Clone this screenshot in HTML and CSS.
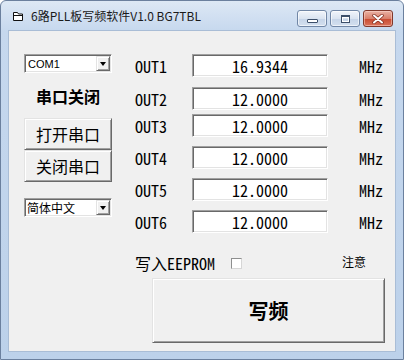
FILE: index.html
```html
<!DOCTYPE html>
<html lang="zh-CN">
<head>
    <meta charset="UTF-8">
    <title>6路PLL板写频软件V1.0 BG7TBL</title>
    <link rel="stylesheet" href="styles.css">
</head>
<body>
    <div class="window">
        <div class="titlebar">
            <svg class="app-icon" width="12" height="11" viewBox="0 0 12 11">
                <path d="M1.5 1.5h4l1 1.5h4v6.5h-9z" fill="#fff" stroke="#111" stroke-width="1"/>
                <path d="M1.5 4.5h9" stroke="#111" stroke-width="1"/>
            </svg>
            <span class="title">6路PLL板写频软件V1.0 BG7TBL</span>
            <div class="tb-buttons">
                <div class="tb-btn"><span class="ico-min"></span></div>
                <div class="tb-btn"><span class="ico-max"></span></div>
                <div class="tb-btn close">
                    <svg width="12" height="10" viewBox="0 0 12 10">
                        <path d="M2 1.5l8 7M10 1.5l-8 7" stroke="#7a2a1c" stroke-width="3.4" stroke-linecap="round"/>
                        <path d="M2 1.5l8 7M10 1.5l-8 7" stroke="#fff" stroke-width="2" stroke-linecap="round"/>
                    </svg>
                </div>
            </div>
        </div>
        <div class="client">
            <div class="left-col">
                <div class="combo">
                    <span class="combo-text latin">COM1</span>
                    <span class="combo-arrow"></span>
                </div>
                <div class="status">串口关闭</div>
                <button class="btn side-btn">打开串口</button>
                <button class="btn side-btn">关闭串口</button>
                <div class="combo lang">
                    <span class="combo-text">简体中文</span>
                    <span class="combo-arrow"></span>
                </div>
            </div>
            <div class="right-col">
                <div class="freqs">
                    <div class="row first"><span class="label">OUT1</span><div class="field">16.9344</div><span class="unit">MHz</span></div>
                    <div class="row second"><span class="label">OUT2</span><div class="field">12.0000</div><span class="unit">MHz</span></div>
                    <div class="row"><span class="label">OUT3</span><div class="field">12.0000</div><span class="unit">MHz</span></div>
                    <div class="row"><span class="label">OUT4</span><div class="field">12.0000</div><span class="unit">MHz</span></div>
                    <div class="row"><span class="label">OUT5</span><div class="field">12.0000</div><span class="unit">MHz</span></div>
                    <div class="row"><span class="label">OUT6</span><div class="field">12.0000</div><span class="unit">MHz</span></div>
                </div>
                <div class="eeprom">
                    <span class="eeprom-text">写入EEPROM</span>
                    <span class="check"></span>
                    <span class="note">注意</span>
                </div>
                <button class="btn write-btn">写频</button>
            </div>
        </div>
    </div>
</body>
</html>
```

FILE: styles.css
```css
body { margin: 0; background: #fff; font-family: "Noto Sans CJK SC", sans-serif; }
.window {
    width: 404px; height: 360px; box-sizing: border-box;
    display: flex; flex-direction: column;
    padding: 0 7px 7px;
    border: 1px solid #6b809e; border-radius: 6px 6px 0 0;
    background: linear-gradient(#dde8f5, #c6d8ee 30px, #bcd1ea);
}
.titlebar { height: 29px; display: flex; align-items: center; flex-shrink: 0; }
.app-icon { margin-left: 4px; margin-top: 1px; }
.title { margin-left: 7px; font-size: 12px; color: #1a1a1a; }
.tb-buttons { margin-left: auto; margin-right: 3px; align-self: flex-start; margin-top: 9px; display: flex; gap: 3px; }
.tb-btn {
    width: 30px; height: 17px; box-sizing: border-box;
    display: flex; align-items: center; justify-content: center;
    border: 1px solid #7187a6; border-radius: 3px;
    background: linear-gradient(#f1f5fb, #dae4f1 50%, #c5d4e8 51%, #d4e0ef);
    box-shadow: inset 0 0 0 1px rgba(255, 255, 255, 0.6);
}
.tb-btn.close {
    border-color: #80382b;
    background: linear-gradient(#eab2a4, #d9806b 50%, #c8492f 51%, #d9725a);
    box-shadow: inset 0 0 0 1px rgba(255, 220, 210, 0.5);
}
.ico-min { width: 9px; height: 2px; margin-top: 5px; background: #fff; border: 1px solid #3c4f6a; border-radius: 1px; }
.ico-max { width: 7px; height: 5px; border: 1px solid #3c4f6a; border-top-width: 2px; box-shadow: inset 0 0 0 1px #fff; }

.client {
    flex: 1; display: flex;
    padding: 23px 0 0 15px;
    background: #f0f0f0;
    border: 1px solid #a9bdd6;
}
.latin { font-family: "Liberation Sans", sans-serif; }
.left-col { width: 88px; display: flex; flex-direction: column; }
.combo {
    height: 19px; box-sizing: border-box;
    display: flex; align-items: center;
    background: #fff;
    border: 1px solid; border-color: #a0a0a0 #fff #fff #a0a0a0;
    box-shadow: inset 1px 1px #696969, inset -1px -1px #e3e3e3;
}
.combo-text { padding-left: 3px; font-size: 11px; color: #000; }
.combo.lang .combo-text { font-size: 12px; padding-left: 2px; }
.combo-arrow {
    margin-left: auto; margin-right: 1px;
    width: 14px; height: 15px; box-sizing: border-box;
    display: flex; align-items: center; justify-content: center;
    background: #f0f0f0;
    border: 1px solid; border-color: #e3e3e3 #696969 #696969 #e3e3e3;
    box-shadow: inset 1px 1px #fff, inset -1px -1px #a0a0a0;
}
.combo-arrow::after { content: ""; border-left: 3.5px solid transparent; border-right: 3.5px solid transparent; border-top: 4px solid #000; margin-top: 1px; }
.status { height: 45px; display: flex; align-items: center; justify-content: center; font-size: 16px; font-weight: 700; color: #000; }
.btn {
    box-sizing: border-box; margin: 0; padding: 0;
    font-family: "Noto Sans CJK SC", sans-serif; color: #000;
    background: #f0f0f0;
    border: 1px solid; border-color: #e3e3e3 #696969 #696969 #e3e3e3;
    box-shadow: inset 1px 1px #fff, inset -1px -1px #a0a0a0;
}
.side-btn { width: 88px; height: 32px; font-size: 16px; }
.combo.lang { margin-top: 16px; }

.right-col { margin-left: 23px; display: flex; flex-direction: column; }
.freqs { display: flex; flex-direction: column; gap: 9px; }
.row { height: 23px; display: flex; align-items: center; }
.row.first { margin-bottom: 1px; }
.row.second { margin-bottom: -5px; }
.label, .field, .unit, .eeprom-text { font-family: "Noto Sans Mono CJK SC", "Liberation Mono", monospace; font-size: 16px; color: #000; }
.label { width: 57px; }
.field {
    width: 136px; height: 23px; box-sizing: border-box;
    display: flex; align-items: center; justify-content: center;
    background: #fff;
    border: 1px solid; border-color: #a0a0a0 #fff #fff #a0a0a0;
    box-shadow: inset 1px 1px #696969, inset -1px -1px #e3e3e3;
}
.unit { margin-left: 31px; }
.eeprom { margin-top: 22px; height: 16px; display: flex; align-items: center; }
.check {
    margin-left: 16px; width: 11px; height: 11px; box-sizing: border-box;
    background: #fff;
    border: 1px solid; border-color: #8e8f8f #d6d6d6 #d6d6d6 #8e8f8f;
}
.note { margin-left: 100px; font-size: 12px; color: #000; margin-top: -3px; }
.write-btn { margin: 7px 0 0 17px; width: 233px; height: 65px; font-size: 20px; font-weight: 700; }
```
